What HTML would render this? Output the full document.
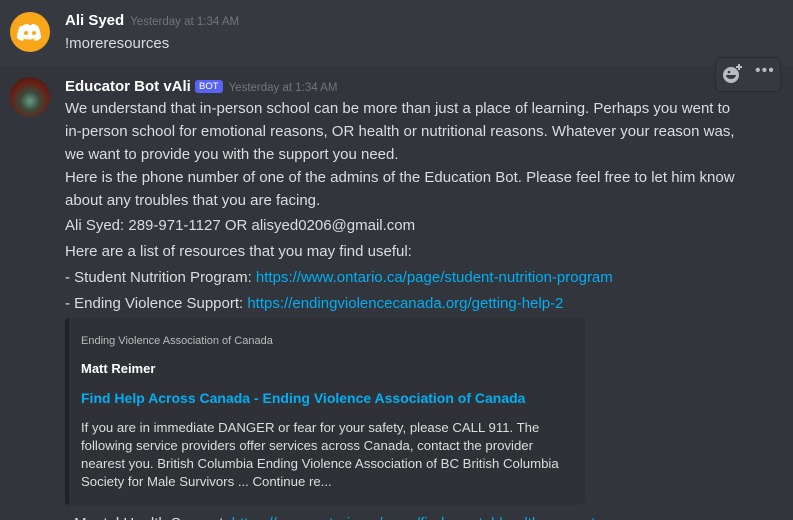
<!DOCTYPE html><html style="width:793px;height:520px;overflow:hidden"><head><style>
body{margin:0;width:793px;height:520px;overflow:hidden;background:#36393f;font-family:"Liberation Sans",sans-serif;color:#dcddde;position:relative}
.a{position:absolute}
.t{font-size:15px;line-height:22px;white-space:nowrap}
.n{font-weight:bold;color:#fff;font-size:15px}
.ts{font-size:11.5px;color:#72767d;margin-left:6px}
a{color:#00aff4;text-decoration:none}
</style></head><body>
<div class="a" style="left:0;top:66px;width:793px;height:454px;background:#32353b"></div>
<div class="a" style="left:10px;top:12px;width:40px;height:40px;border-radius:50%;background:#faa61a">
<svg width="40" height="40" viewBox="0 0 40 40"><path d="M12 14c3-2 5-2 6-2l.5 1h3l.5-1c1 0 3 0 6 2 2 4 3 8 3 12-2 2-4 2.5-6 3l-1-2c1 0 2-1 2-1-4 2-10 2-14 0 0 0 1 1 2 1l-1 2c-2-.5-4-1-6-3 0-4 1-8 3-12z" fill="#fff"/><circle cx="16" cy="21" r="2" fill="#faa61a"/><circle cx="24" cy="21" r="2" fill="#faa61a"/></svg></div>
<div class="a t" style="left:65px;top:10px"><span class="n">Ali Syed</span><span class="ts">Yesterday at 1:34 AM</span></div>
<div class="a t" style="left:65px;top:33px">!moreresources</div>
<div class="a" style="left:10px;top:77px;width:40px;height:40px;border-radius:50%;background:radial-gradient(circle at 50% 60%,#6a9a88 0,#3a4a3a 30%,#6b1f14 60%,#1b1b1b 100%)"></div>
<div class="a t" style="left:65px;top:76px"><span class="n">Educator Bot vAli</span> <span style="background:#5865f2;color:#fff;font-size:9.5px;padding:1px 4px;border-radius:3px;vertical-align:2px">BOT</span><span class="ts">Yesterday at 1:34 AM</span></div>
<div class="a" style="left:715px;top:57px;width:64px;height:33px;border:1px solid #2a2c31;border-radius:5px;background:#36393f"></div>
<svg class="a" style="left:721px;top:62px" width="24" height="24" viewBox="0 0 24 24"><circle cx="10" cy="13" r="8" fill="#b9bbbe"/><path d="M5 13a5 4 0 0 0 10 0z" fill="#36393f"/><circle cx="8" cy="10" r="1.3" fill="#36393f"/><path d="M18 2v6M15 5h6" stroke="#b9bbbe" stroke-width="2"/></svg>
<div class="a" style="left:755px;top:62px;color:#b9bbbe;font-size:16px;letter-spacing:1px">•••</div>
<div class="a t" style="left:65px;top:97px;line-height:23px">We understand that in-person school can be more than just a place of learning. Perhaps you went to<br>in-person school for emotional reasons, OR health or nutritional reasons. Whatever your reason was,<br>we want to provide you with the support you need.</div>
<div class="a t" style="left:65px;top:166px;line-height:23px">Here is the phone number of one of the admins of the Education Bot. Please feel free to let him know<br>about any troubles that you are facing.</div>
<div class="a t" style="left:65px;top:215px">Ali Syed: 289-971-1127 OR alisyed0206@gmail.com</div>
<div class="a t" style="left:65px;top:241px">Here are a list of resources that you may find useful:</div>
<div class="a t" style="left:65px;top:267px">- Student Nutrition Program: <a>https://www.ontario.ca/page/student-nutrition-program</a></div>
<div class="a t" style="left:65px;top:293px">- Ending Violence Support: <a>https://endingviolencecanada.org/getting-help-2</a></div>
<div class="a" style="left:65px;top:318px;width:516px;height:187px;background:#2f3136;border-left:4px solid #202225;border-radius:4px"></div>
<div class="a" style="left:81px;top:335px;font-size:11px;color:#b9bbbe">Ending Violence Association of Canada</div>
<div class="a" style="left:81px;top:361px;font-size:13px;font-weight:bold;color:#fff">Matt Reimer</div>
<div class="a" style="left:81px;top:390px;font-size:14px;font-weight:bold;color:#00aff4">Find Help Across Canada - Ending Violence Association of Canada</div>
<div class="a" style="left:81px;top:419px;font-size:13.2px;line-height:18px;color:#dcddde;white-space:nowrap">If you are in immediate DANGER or fear for your safety, please CALL 911. The<br>following service providers offer services across Canada, contact the provider<br>nearest you. British Columbia Ending Violence Association of BC British Columbia<br>Society for Male Survivors ... Continue re...</div>
<div class="a t" style="left:65px;top:513px">- Mental Health Support: <a>https://www.ontario.ca/page/find-mental-health-support</a></div>
</body></html>
